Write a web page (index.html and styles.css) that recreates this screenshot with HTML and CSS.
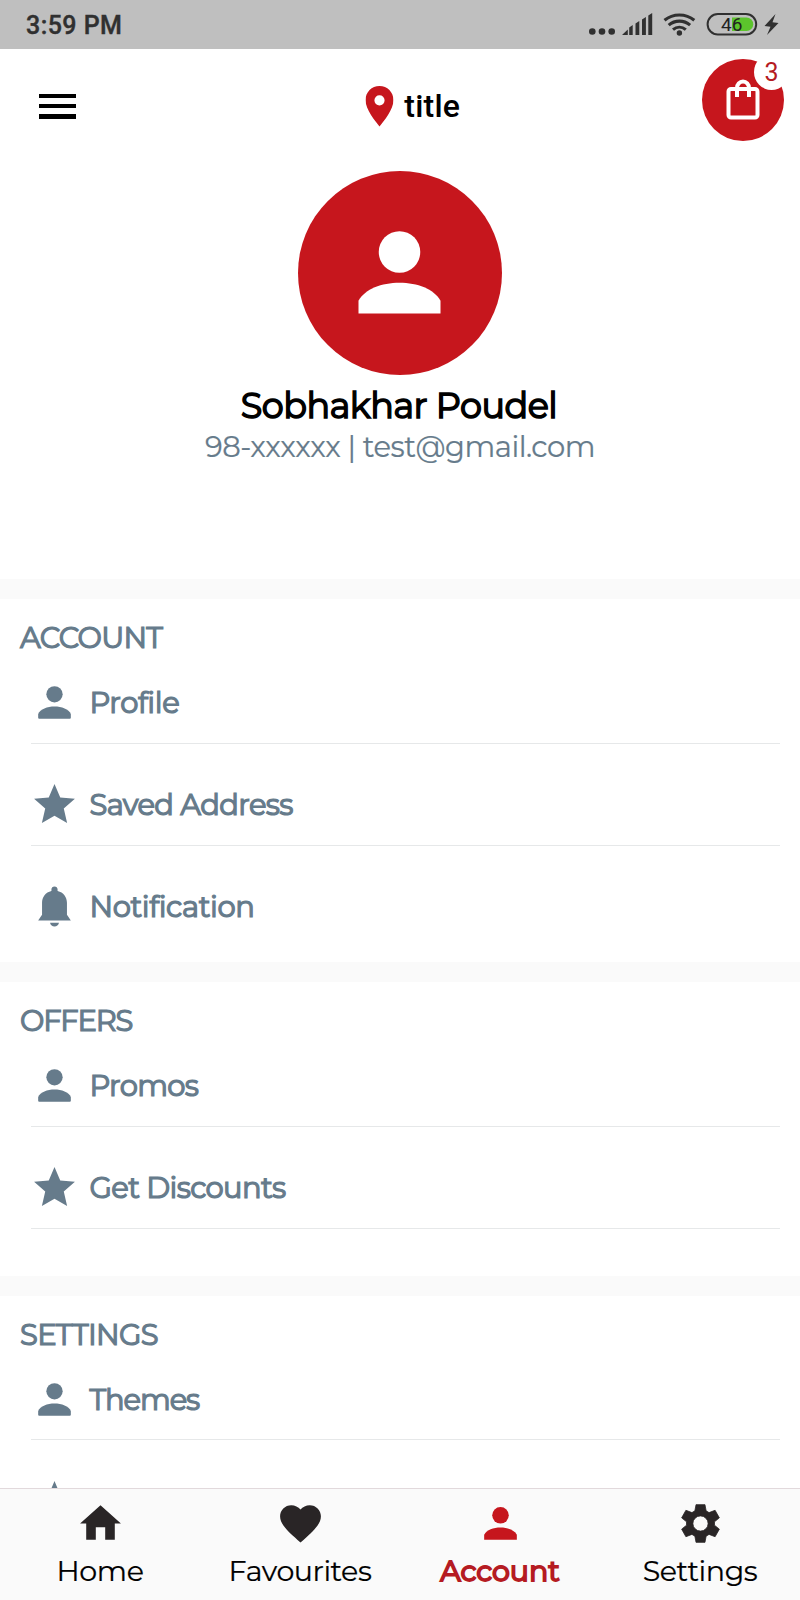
FILE: index.html
```html
<!DOCTYPE html>
<html lang="en">
<head>
<meta charset="utf-8">
<title>Account</title>
<link rel="stylesheet" href="styles.css">
</head>
<body>
<svg class="defs" aria-hidden="true">
  <symbol id="person" viewBox="0 0 24 24"><circle cx="12" cy="8" r="4.050"/><path d="M4 20v-2.500C5.300 15.200 8.500 14 12 14s6.700 1.200 8 3.500V20z"/></symbol>
  <symbol id="person-soft" viewBox="0 0 24 24"><circle cx="12" cy="8" r="4"/><path d="M4 19.500v-1.900C5 15.300 8.500 14 12 14s7 1.300 8 3.600v1.900q0 .5-.5.5h-15q-.5 0-.5-.5z"/></symbol>
  <symbol id="star" viewBox="0 0 24 24"><path d="M12 17.500L18.180 21l-1.640-7.030L22 9.240l-7.190-.61L12 2 9.190 8.630 2 9.240l5.460 4.730L5.820 21z"/></symbol>
  <symbol id="bell" viewBox="0 0 24 24"><path d="M12 2.200c-.9 0-1.500.6-1.500 1.400v.8C7.600 5 5.900 7.500 5.900 10.200V16L4 18.800h16L18.100 16v-5.800c0-2.700-1.700-5.200-4.600-5.800v-.8c0-.8-.6-1.400-1.500-1.400z"/><path d="M9.800 19.900h4.400c-.3 1.200-1.100 1.900-2.200 1.900s-1.900-.7-2.200-1.900z"/></symbol>
</svg>
<div class="screen">
  <div class="status">
    <span class="time">3:59 PM</span>
    <svg class="indicators" width="200" height="49" viewBox="0 0 200 49">
      <g fill="#303030">
        <circle cx="12.300" cy="31.500" r="3.300"/><circle cx="22" cy="31.500" r="3.300"/><circle cx="31.700" cy="31.500" r="3.300"/>
        <path d="M42 35l5.800-5.500V35zM49.200 27.500l3.500-2.500v10h-3.500zM55.500 23.500l3.800-2.500v14h-3.800zM62 19.500l3.900-2.500v18H62zM68.300 15.500l3.900-2.500v22h-3.900z"/>
        <circle cx="99.400" cy="33" r="2.700"/>
      </g>
      <g fill="none" stroke="#303030" stroke-width="3.100">
        <path d="M84.500 20.300c8.500-7 21.300-7 29.800 0M88.700 25.100c6.200-5.300 15.200-5.300 21.400 0M93 29.600c3.800-3.200 9-3.200 12.800 0"/>
        <rect x="127.600" y="14" width="48.600" height="20.500" rx="10.250" stroke-width="2"/>
      </g>
      <path d="M152 17.500h14.500a6.700 6.700 0 0 1 0 13.500H152z" fill="#5cc42c"/>
      <text class="battery" x="151.800" y="31">46</text>
      <path d="M195.500 14l-11 12 6 .8-3.500 8.200L198.500 23l-6-.8z" fill="#303030"/>
    </svg>
  </div>

  <header class="header">
    <div class="menu"><i></i><i></i><i></i></div>
    <div class="place">
      <svg width="28" height="41" viewBox="0 0 28 41"><path fill-rule="evenodd" d="M14 0C6.200 0 0 6.200 0 14c0 9.500 10 21.500 14 26.500C18 35.500 28 23.500 28 14 28 6.200 21.800 0 14 0zm0 9.200a5.100 5.100 0 1 1 0 10.200 5.100 5.100 0 0 1 0-10.200z" fill="#c6161d"/></svg>
      <span>title</span>
    </div>
    <div class="cart">
      <svg width="34" height="42" viewBox="0 0 34 42" fill="none" stroke="#fff" stroke-width="4"><rect x="2.500" y="11" width="29" height="28.500" rx="2.500"/><path d="M11 19v-9a6 6.500 0 0 1 12 0v9"/></svg>
      <span class="badge">3</span>
    </div>
  </header>

  <section class="user">
    <div class="avatar"><svg width="123" height="123"><use href="#person"/></svg></div>
    <h1 class="name">Sobhakhar Poudel</h1>
    <p class="contact">98-xxxxxx | test@gmail.com</p>
  </section>

  <section class="group group-account">
    <h2 class="spaced">ACCOUNT</h2>
    <div class="row"><svg><use href="#person-soft"/></svg><span class="spaced">Profile</span></div>
    <div class="row"><svg><use href="#star"/></svg><span>Saved Address</span></div>
    <div class="row last"><svg><use href="#bell"/></svg><span class="spaced">Notification</span></div>
  </section>
  <section class="group group-offers">
    <h2>OFFERS</h2>
    <div class="row"><svg><use href="#person-soft"/></svg><span>Promos</span></div>
    <div class="row"><svg><use href="#star"/></svg><span>Get Discounts</span></div>
  </section>
  <section class="group group-settings">
    <h2 class="spaced">SETTINGS</h2>
    <div class="row"><svg><use href="#person-soft"/></svg><span class="tight">Themes</span></div>
    <div class="row last"><svg><use href="#star"/></svg></div>
  </section>

  <nav class="tabs">
    <div class="tab"><svg viewBox="0 0 24 24"><path d="M9.700 20v-6.200h4.600V20H19v-8h3L12 3 2 12h3v8z"/></svg><span>Home</span></div>
    <div class="tab"><svg viewBox="0 0 24 24"><path d="M12 21.350l-1.450-1.320C5.400 15.360 2 12.280 2 8.500 2 5.420 4.420 3 7.500 3c1.740 0 3.410.81 4.500 2.090C13.090 3.810 14.760 3 16.500 3 19.580 3 22 5.420 22 8.500c0 3.780-3.400 6.860-8.550 11.540L12 21.350z"/></svg><span>Favourites</span></div>
    <div class="tab active"><svg><use href="#person"/></svg><span>Account</span></div>
    <div class="tab"><svg viewBox="-.6 -.6 25.200 25.200"><path fill-rule="evenodd" d="M9.700 2.300h4.600l.6 3.200 1.500.9 3.100-1.200 2.200 3.900-2.500 2v1.800l2.500 2-2.200 3.900-3.100-1.200-1.500.9-.6 3.200H9.700l-.6-3.200-1.500-.9-3.100 1.200-2.200-3.900 2.500-2v-1.800l-2.500-2 2.200-3.900 3.100 1.200 1.500-.9zM12 8.100a3.900 3.900 0 1 0 0 7.800 3.900 3.900 0 0 0 0-7.800z" stroke="#292526" stroke-width=".4" stroke-linejoin="round"/></svg><span>Settings</span></div>
  </nav>
</div>
</body>
</html>
```
FILE: styles.css
```css
* { box-sizing: border-box; }
body { margin: 0; font-family: Montserrat, Inter, sans-serif; background: #fafafa; }
h1, h2, p { margin: 0; font-weight: 400; white-space: nowrap; }
svg { display: block; flex: none; }
.defs { position: absolute; width: 0; height: 0; }
.screen { width: 800px; height: 1600px; overflow: hidden; display: flex; flex-direction: column; }

.status { height: 49px; flex: none; background: #bfbfbf; display: flex; justify-content: space-between; align-items: center; padding: 0 20px 0 26px; }
.time { font: 500 25px/50px Roboto, sans-serif; color: #303030; letter-spacing: .45px; padding-top: 2px; -webkit-text-stroke: .4px; }
.battery { font: 400 19px Roboto, sans-serif; fill: #222; text-anchor: middle; }

.header { height: 112px; flex: none; background: #fff; display: grid; grid-template-columns: 1fr auto 1fr; align-items: start; padding: 10px 16px 0 38.500px; }
.menu { display: grid; gap: 6px; padding-top: 35px; }
.menu i { width: 37px; height: 4.200px; background: #000; }
.place { display: flex; align-items: center; gap: 11px; height: 41px; margin-top: 27px; transform: translateX(1.500px); }
.place span { font: 500 32px/40px Roboto, sans-serif; color: #000; padding-bottom: 2px; letter-spacing: .2px; }
.cart { position: relative; justify-self: end; width: 82px; height: 82px; border-radius: 50%; background: #c6161d; display: flex; justify-content: center; padding-top: 19px; }
.badge { position: absolute; right: -5px; top: -5px; width: 35px; height: 36px; border-radius: 50%; background: #fff; color: #b51b22; font: 400 25px/37px Roboto, sans-serif; text-align: center; }

.user { height: 418px; flex: none; background: #fff; display: flex; flex-direction: column; align-items: center; padding-top: 10px; }
.avatar { width: 204px; height: 204px; border-radius: 50%; background: #c6161d; fill: #fff; display: grid; place-items: center; }
.avatar svg { margin: -.5px 0 0 -.5px; }
.name { font-size: 35px; line-height: 44px; margin-top: 9px; color: #000; -webkit-text-stroke: 1.500px; letter-spacing: -.5px; padding-right: 2px; }
.contact { font-size: 29px; line-height: 34px; color: #667b8b; margin-top: 1.500px; letter-spacing: -.46px; -webkit-text-stroke: .2px; }

.group { background: #fff; flex: none; margin-top: 20px; padding: 0 20px; color: #667b8b; fill: #667b8b; letter-spacing: -.65px; -webkit-text-stroke: 1.200px; }
.group svg { stroke: none; }
.group-account { height: 363px; }
.group-offers { height: 293.500px; }
.group-settings { height: 192px; overflow: hidden; }
.group h2 { font-size: 29px; line-height: 77px; height: 79px; letter-spacing: -1.200px; }
.group h2.spaced { letter-spacing: -.7px; }
.row { display: flex; align-items: center; margin-left: 10.500px; height: 65.500px; padding-bottom: 15px; border-bottom: 1px solid #e6e8e9; font-size: 29px; white-space: nowrap; }
.row + .row { margin-top: 36.500px; }
.row.last { border-color: transparent; }
.row svg { width: 49px; height: 49px; margin: 0 10.200px 0 -.2px; }
.row .spaced { letter-spacing: -.4px; }
.row .tight { letter-spacing: -1.100px; }

.tabs { height: 113px; flex: none; margin-top: auto; background: #fafafa; border-top: 1px solid #e2d9dc; display: grid; grid-template-columns: repeat(4, 1fr); position: relative; }
.tab { display: flex; flex-direction: column; align-items: center; padding-top: 10px; font-size: 28.500px; line-height: 40px; color: #000; fill: #292526; letter-spacing: -.4px; }
.tab svg { width: 49px; height: 49px; }
.tab span { margin-top: 3px; white-space: nowrap; -webkit-text-stroke: .2px; }
.active { color: #b51b22; fill: #c6161d; }
.active span { -webkit-text-stroke: 1.800px; letter-spacing: 0; }
```
